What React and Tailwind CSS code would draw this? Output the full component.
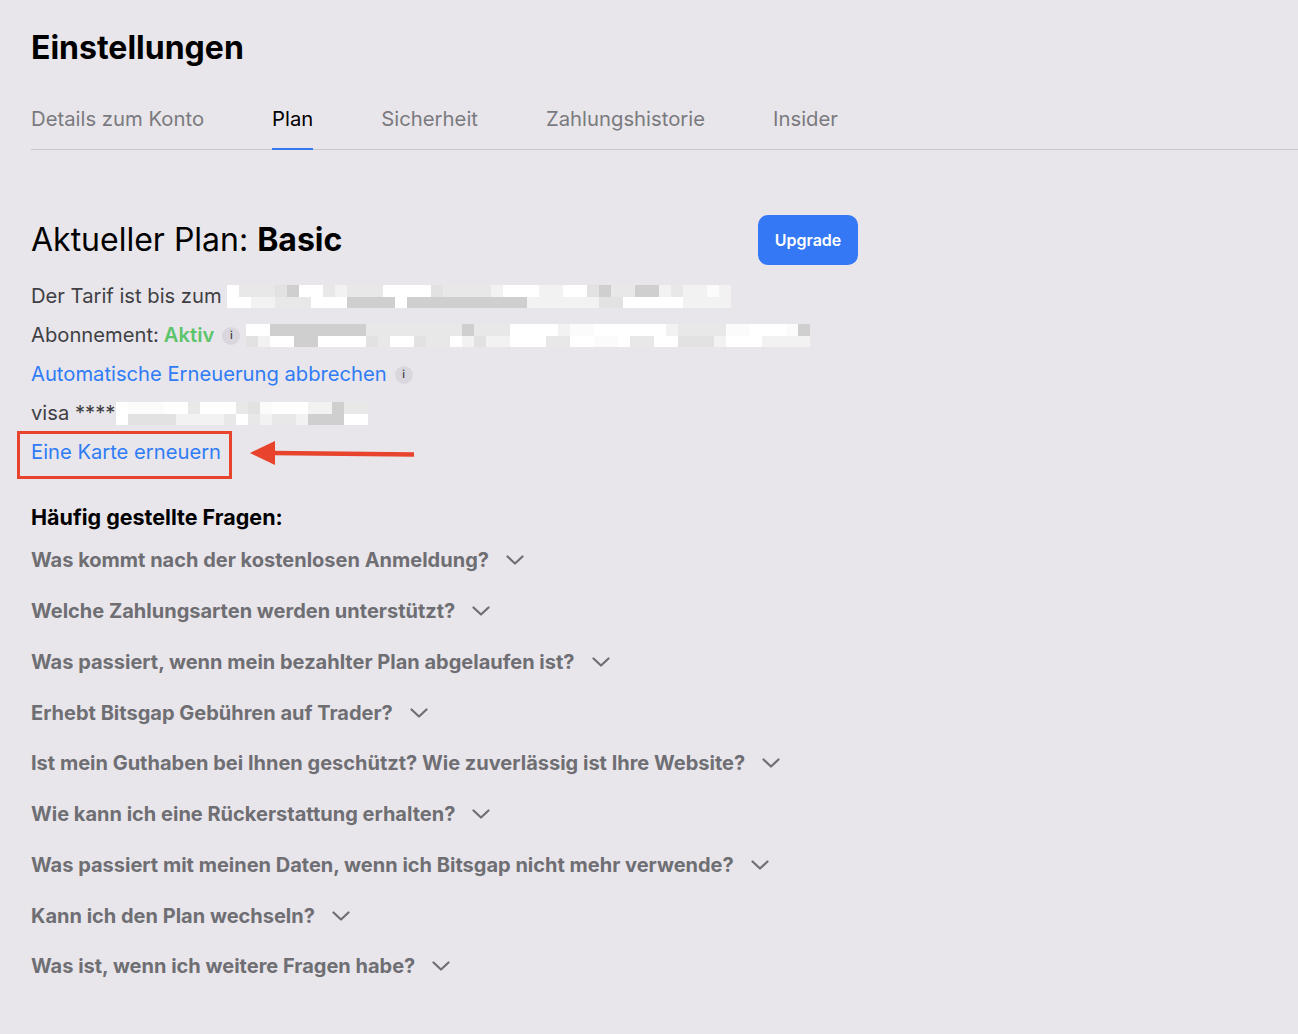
const tabs = ['Details zum Konto', 'Plan', 'Sicherheit', 'Zahlungshistorie', 'Insider']

const faqs = [
  'Was kommt nach der kostenlosen Anmeldung?',
  'Welche Zahlungsarten werden unterstützt?',
  'Was passiert, wenn mein bezahlter Plan abgelaufen ist?',
  'Erhebt Bitsgap Gebühren auf Trader?',
  'Ist mein Guthaben bei Ihnen geschützt? Wie zuverlässig ist Ihre Website?',
  'Wie kann ich eine Rückerstattung erhalten?',
  'Was passiert mit meinen Daten, wenn ich Bitsgap nicht mehr verwende?',
  'Kann ich den Plan wechseln?',
  'Was ist, wenn ich weitere Fragen habe?',
]

// weighted: mostly white / near-white, a few mid greys
const shades = [
  'bg-white', 'bg-white', 'bg-white', 'bg-[#fbfbfb]',
  'bg-[#f2f2f2]', 'bg-[#f2f2f2]', 'bg-[#e8e8e8]', 'bg-[#e8e8e8]',
  'bg-[#e2e2e2]', 'bg-[#cfcfcf]',
]

function Redacted({ cols, seed }) {
  let s = seed * 9301 + 49297
  const rand = () => {
    s = (s * 1103515245 + 12345) % 2147483648
    return s / 2147483648
  }
  const cells = []
  for (let r = 0; r < 2; r++) {
    let prev = 0
    for (let c = 0; c < cols; c++) {
      // neighbours often repeat, like a real pixelated blur
      const idx = rand() < 0.4 ? prev : Math.floor(rand() * shades.length)
      prev = idx
      cells.push(<div key={r + '-' + c} className={`h-[11.5px] w-[12px] ${shades[idx]}`} />)
    }
  }
  return (
    <div className="grid grid-flow-row" style={{ gridTemplateColumns: `repeat(${cols}, 12px)` }}>
      {cells}
    </div>
  )
}

function InfoDot() {
  return (
    <span className="flex h-[18px] w-[18px] items-center justify-center rounded-full bg-[#d9d7dd] text-[11px] font-medium text-[#3a3a3f]">
      i
    </span>
  )
}

function Chevron() {
  return (
    <svg width="18" height="10" viewBox="0 0 18 10" fill="none" className="text-[#6e6e73]">
      <polyline points="1.5,1.5 9,8.5 16.5,1.5" stroke="currentColor" strokeWidth="2.2" strokeLinecap="round" strokeLinejoin="round" />
    </svg>
  )
}

function App() {
  return (
    <div className="min-h-[1034px] bg-[#e8e6eb] pl-[31px] pt-[28px] font-['Inter','Noto_Sans',sans-serif] text-black">
      <h1 className="text-[32px] font-bold leading-[40px]">Einstellungen</h1>

      <div className="mt-[37px] flex gap-[68px] border-b border-[#cac8ce]">
        {tabs.map((t) => (
          <div
            key={t}
            className={`-mb-px pb-[15px] text-[20.3px] leading-[28px] ${
              t === 'Plan' ? 'border-b-2 border-[#3479f0] text-black' : 'border-b-2 border-transparent text-[#7a7a7e]'
            }`}
          >
            {t}
          </div>
        ))}
      </div>

      <div className="mt-[65px] flex w-[827px] items-center justify-between">
        <h2 className="text-[32px] leading-[40px] font-normal">
          Aktueller Plan: <span className="font-bold">Basic</span>
        </h2>
        <button
          type="button"
          className="h-[50px] w-[100px] rounded-[10px] bg-[#3478f6] text-[16px] font-semibold text-white"
        >
          Upgrade
        </button>
      </div>

      <div className="mt-[12px] text-[20.2px] text-[#3f3f44]">
        <div className="flex h-[39px] items-center gap-[5px]">
          <span>Der Tarif ist bis zum</span>
          <Redacted cols={42} seed={1} />
        </div>
        <div className="flex h-[39px] items-center">
          <span>Abonnement:</span>
          <span className="ml-[5px] font-semibold text-[#5cc46a]">Aktiv</span>
          <span className="ml-[8px]"><InfoDot /></span>
          <span className="ml-[6px]"><Redacted cols={47} seed={2} /></span>
        </div>
        <div className="flex h-[39px] items-center gap-[8px]">
          <span className="text-[#2f7cf6]">Automatische Erneuerung abbrechen</span>
          <InfoDot />
        </div>
        <div className="flex h-[39px] items-center gap-[1px]">
          <span>visa ****</span>
          <Redacted cols={21} seed={3} />
        </div>
        <div className="flex h-[39px] items-center">
          <span className="relative text-[#2f7cf6]">
            Eine Karte erneuern
            <span className="absolute -top-[6px] -right-[11px] -bottom-[11px] -left-[14px] border-[3px] border-[#e8432d]" />
            <svg
              width="166"
              height="26"
              viewBox="0 0 166 26"
              className="absolute top-[4px] left-[219px]"
            >
              <line x1="22" y1="12" x2="164" y2="13.5" stroke="#e8432d" strokeWidth="4.5" />
              <polygon points="0,12 25,0 25,24" fill="#e8432d" />
            </svg>
          </span>
        </div>
      </div>

      <h3 className="mt-[31px] text-[21.5px] font-bold leading-[28px]">Häufig gestellte Fragen:</h3>

      <div className="mt-[4px]">
        {faqs.map((q) => (
          <div key={q} className="flex h-[50.75px] items-center gap-[17px]">
            <span className="text-[20px] font-bold text-[#6e6e73]">{q}</span>
            <Chevron />
          </div>
        ))}
      </div>
    </div>
  )
}

export default App
